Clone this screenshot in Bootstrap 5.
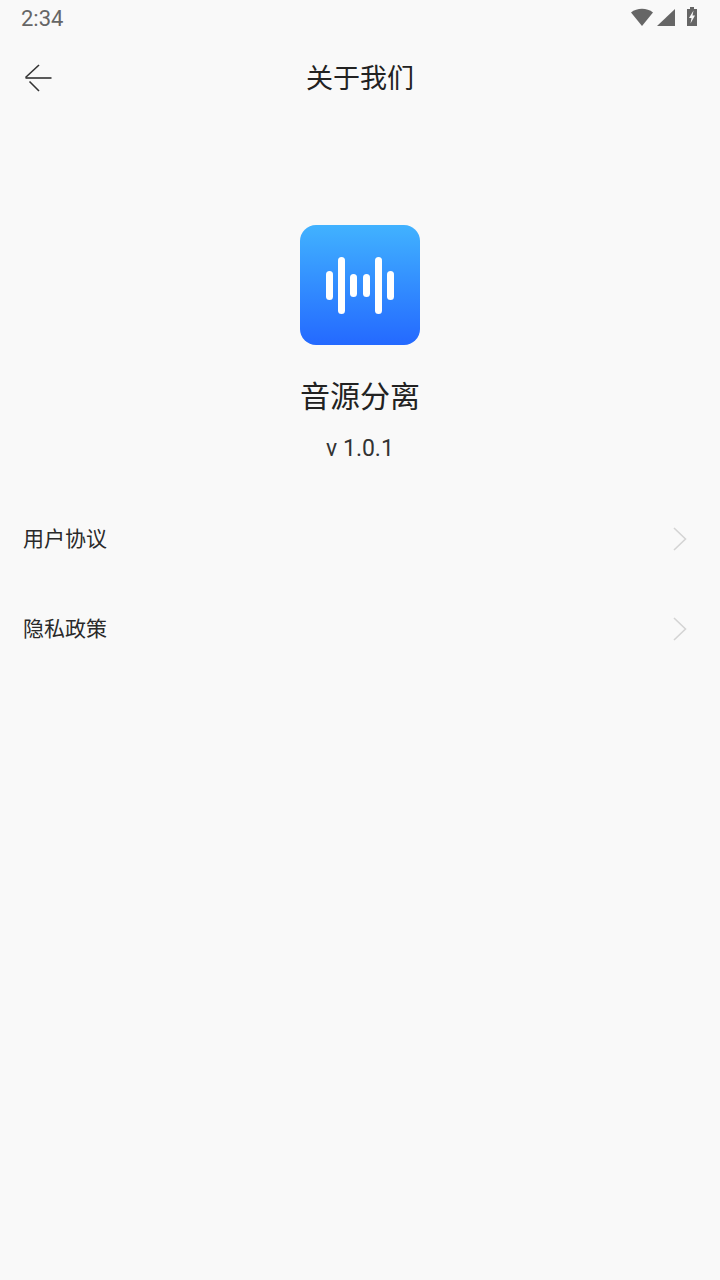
<!DOCTYPE html>
<html lang="zh-CN">

<head>
    <meta charset="UTF-8">
    <meta name="viewport" content="width=device-width, initial-scale=1.0">
    <title>关于我们</title>
    <link href="https://cdn.jsdelivr.net/npm/bootstrap@5.3.0/dist/css/bootstrap.min.css" rel="stylesheet">
    <style>
        body {
            font-family: Roboto, "Noto Sans CJK SC", sans-serif;
            background-color: #f9f9f9;
            color: #222;
            height: 1280px;
            overflow: hidden;
        }

        .status-row {
            height: 38px;
            padding: 0 22px 0 21px;
            color: #666;
            font-size: 22px;
        }

        .status-time {
            padding-bottom: 2px;
        }

        .top-row {
            height: 80px;
            padding-left: 24px;
            position: relative;
        }

        .top-title {
            position: absolute;
            left: 0;
            right: 0;
            padding-top: 2px;
            text-align: center;
            font-size: 27px;
            line-height: 36px;
        }

        .app-logo {
            width: 120px;
            height: 120px;
            margin-top: 107px;
            border-radius: 16px;
            background: linear-gradient(#41b2ff, #2469ff);
            gap: 5.4px;
        }

        .wave {
            width: 7px;
            background: #fff;
            border-radius: 4px;
        }

        .wave-a { height: 29px; }
        .wave-b { height: 57px; }
        .wave-c { height: 23px; }

        .app-name {
            font-size: 30px;
            line-height: 42px;
            margin-top: 31px;
        }

        .app-version {
            font-size: 23px;
            line-height: 32px;
            margin-top: 15px;
            color: #333;
        }

        .link-list {
            margin-top: 30px;
        }

        .link-item {
            height: 90px;
            padding: 0 33px 0 23px;
            font-size: 21px;
            color: #2a2a2a;
            text-decoration: none;
        }

        .link-arrow {
            margin-bottom: 3px;
        }
    </style>
</head>

<body>
    <div class="status-row d-flex align-items-center justify-content-between">
        <span class="status-time">2:34</span>
        <svg width="68" height="24" viewBox="0 0 68 24">
            <path d="M1 5.5C7 0.5 17 0.5 23 5.5L12 19Z" fill="#666" />
            <path d="M27 19L45 2V19Z" fill="#666" />
            <path d="M57 2H60V0H64V2H67V19H57Z" fill="#666" />
            <path d="M63.5 3.5L59 11H61.5L60.5 16.5L65 8.5H62.5Z" fill="#f9f9f9" />
        </svg>
    </div>

    <div class="top-row d-flex align-items-center">
        <div class="top-title">关于我们</div>
        <svg width="30" height="30" viewBox="0 0 30 30" fill="none" stroke="#333" stroke-width="1.6">
            <path d="M1.5 15H27.5" />
            <path d="M15 2L1.5 14.5" />
            <path d="M5.5 18.5L15 28" />
        </svg>
    </div>

    <div class="d-flex flex-column align-items-center">
        <div class="app-logo d-flex align-items-center justify-content-center">
            <div class="wave wave-a"></div>
            <div class="wave wave-b"></div>
            <div class="wave wave-c"></div>
            <div class="wave wave-c"></div>
            <div class="wave wave-b"></div>
            <div class="wave wave-a"></div>
        </div>
        <div class="app-name">音源分离</div>
        <div class="app-version">v 1.0.1</div>
    </div>

    <div class="link-list">
        <a class="link-item d-flex align-items-center justify-content-between" href="#">
            <span>用户协议</span>
            <svg class="link-arrow" width="14" height="24" viewBox="0 0 14 24" fill="none" stroke="#d4d4d4" stroke-width="1.6">
                <path d="M1 1L12.5 12L1 23" />
            </svg>
        </a>
        <a class="link-item d-flex align-items-center justify-content-between" href="#">
            <span>隐私政策</span>
            <svg class="link-arrow" width="14" height="24" viewBox="0 0 14 24" fill="none" stroke="#d4d4d4" stroke-width="1.6">
                <path d="M1 1L12.5 12L1 23" />
            </svg>
        </a>
    </div>

    <script src="https://cdn.jsdelivr.net/npm/bootstrap@5.3.0/dist/js/bootstrap.bundle.min.js"></script>
</body>

</html>
